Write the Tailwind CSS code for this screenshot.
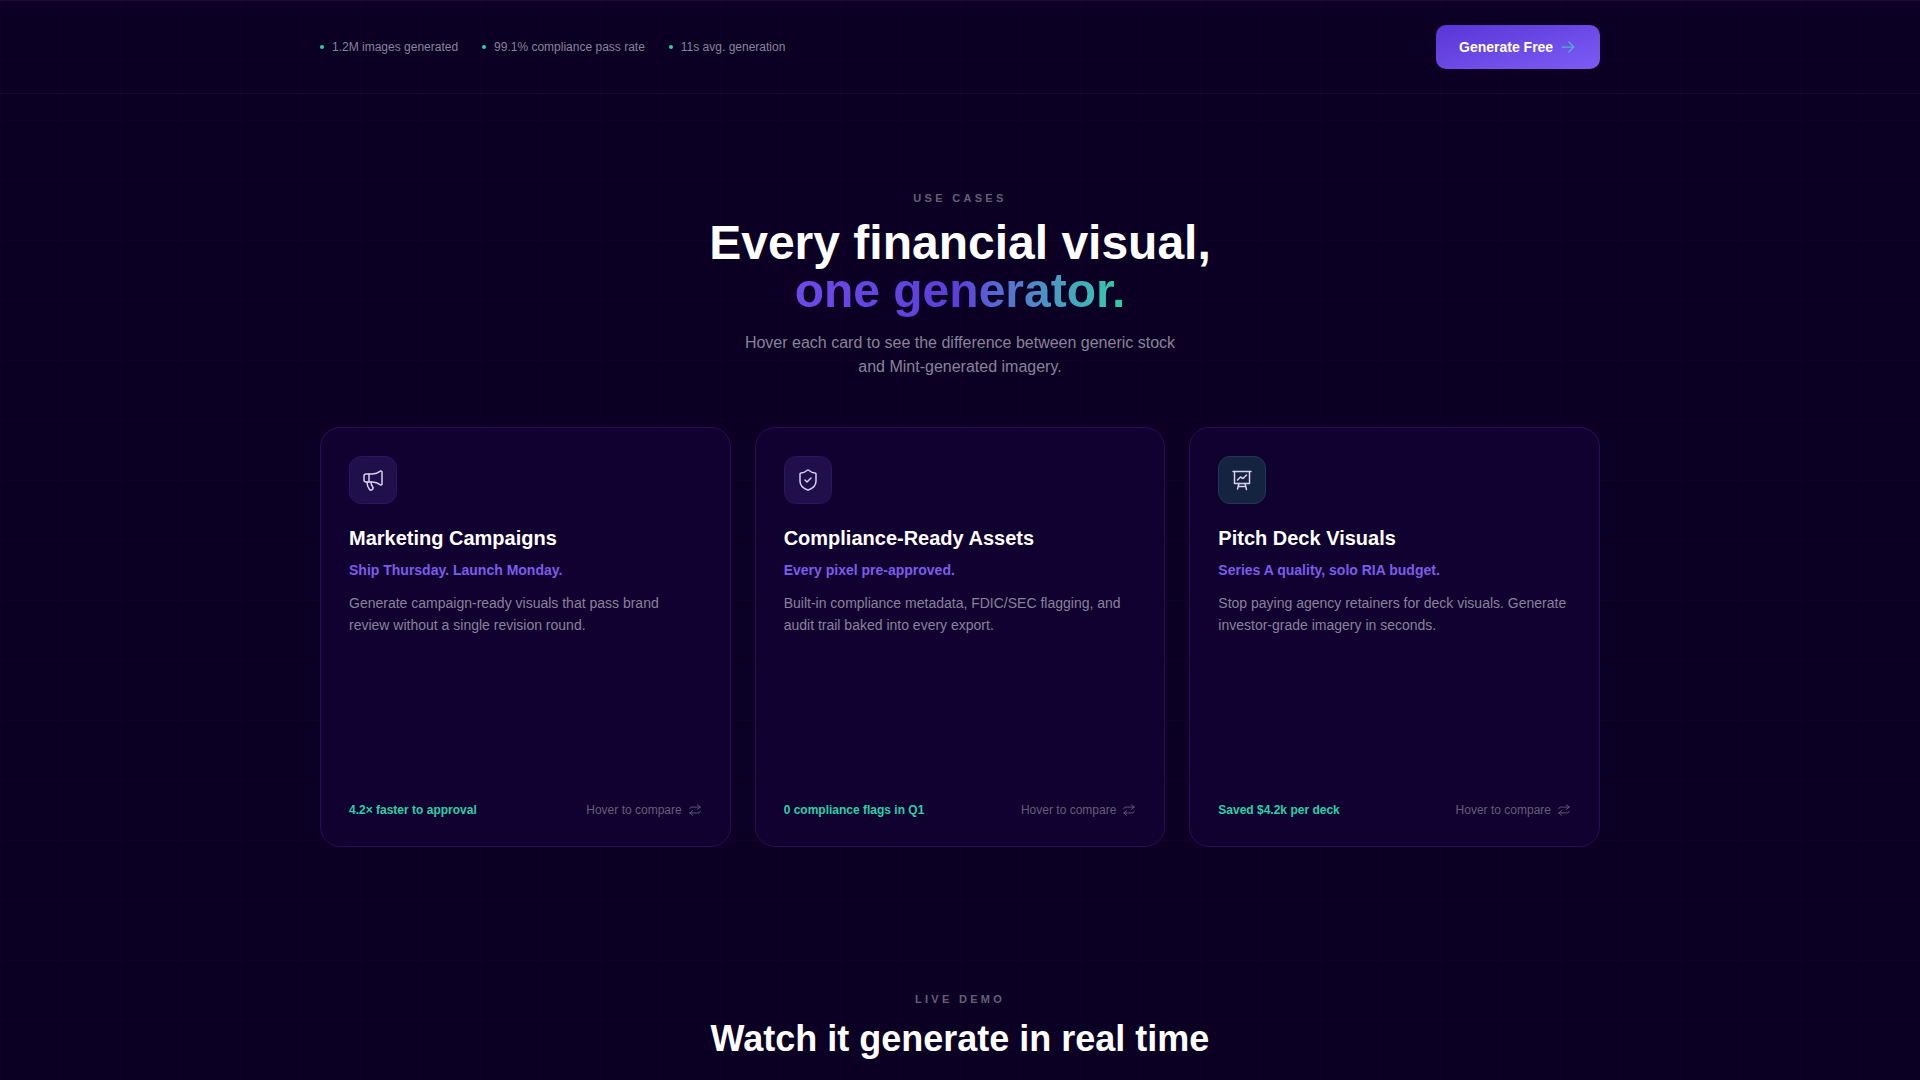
<!DOCTYPE html>
<html lang="en">

<head>
    <meta charset="UTF-8">
    <meta name="viewport" content="width=device-width, initial-scale=1.0">
    <title>Mint - Use Cases</title>
    <script src="https://cdn.jsdelivr.net/npm/@tailwindcss/browser@4"></script>
</head>

<body class="bg-[#0b0023] h-[1080px] overflow-hidden font-['Liberation_Sans',Arial,sans-serif] text-white bg-[linear-gradient(rgba(108,71,255,0.025)_1px,transparent_1px),linear-gradient(90deg,rgba(108,71,255,0.025)_1px,transparent_1px)] bg-[size:60px_60px]">
    <!-- top strip -->
    <div class="border-t border-b border-t-[#1a0a40] border-b-[#160a30] h-[94px]">
        <div class="w-[1280px] mx-auto h-full flex items-center justify-between">
            <div class="flex items-center gap-6 text-xs text-[#8a8299]">
                <div class="flex items-center gap-2"><span class="w-1 h-1 rounded-full bg-[#2bcfa8]"></span>1.2M images generated</div>
                <div class="flex items-center gap-2"><span class="w-1 h-1 rounded-full bg-[#2bcfa8]"></span>99.1% compliance pass rate</div>
                <div class="flex items-center gap-2"><span class="w-1 h-1 rounded-full bg-[#2bcfa8]"></span>11s avg. generation</div>
            </div>
            <button class="w-[164px] h-11 pl-[23px] rounded-[10px] bg-linear-to-br from-[#5b34d6] to-[#7c5cf5] flex items-center gap-[5px] text-sm font-bold text-white">
                Generate Free
                <svg class="w-5 h-5 text-[#4fb0d0]" viewBox="0 0 24 24" fill="none" stroke="currentColor" stroke-width="1.5" stroke-linecap="round" stroke-linejoin="round"><path d="M5 12h14M13 6l6 6-6 6"/></svg>
            </button>
        </div>
    </div>

    <!-- use cases -->
    <section class="w-[1280px] mx-auto pt-[96px] text-center">
        <p class="text-[11px] leading-[16px] font-bold tracking-[0.3em] text-[#665e78]">USE CASES</p>
        <h1 class="mt-[13px] text-[48px] leading-[48px] font-bold">Every financial visual,<br><span class="bg-linear-to-r from-[#6d4ae8] via-[#5b3fd8] to-[#2bcfa8] bg-clip-text text-transparent">one generator.</span></h1>
        <p class="mt-4 text-base leading-[24px] text-[#8a8299]">Hover each card to see the difference between generic stock<br>and Mint-generated imagery.</p>

        <div class="grid grid-cols-3 gap-6 mt-12 text-left">
            <article class="h-[420px] rounded-[20px] border border-[#23105a] bg-[#100130] p-7 flex flex-col">
                <div class="w-12 h-12 rounded-xl bg-[#1f0f4a] border border-[#2a1560] flex items-center justify-center">
                    <svg class="w-6 h-6 text-[#d8d0ee]" viewBox="0 0 24 24" fill="none" stroke="currentColor" stroke-width="1.5" stroke-linecap="round" stroke-linejoin="round"><path d="M11 6a13 13 0 0 0 8.4-2.8A1 1 0 0 1 21 4v12a1 1 0 0 1-1.6.8A13 13 0 0 0 11 14H5a2 2 0 0 1-2-2V8a2 2 0 0 1 2-2z"/><path d="M6 14a12 12 0 0 0 2.4 7.2 2 2 0 0 0 3.2-2.4A8 8 0 0 1 10 14"/><path d="M8 6v8"/></svg>
                </div>
                <h3 class="mt-5 text-xl leading-7 font-bold">Marketing Campaigns</h3>
                <p class="mt-2 text-sm leading-5 font-bold text-[#7c5ce8]">Ship Thursday. Launch Monday.</p>
                <p class="mt-3 text-sm leading-[22px] text-[#8a8299]">Generate campaign-ready visuals that pass brand review without a single revision round.</p>
                <div class="mt-auto flex items-center justify-between text-xs">
                    <span class="font-bold text-[#2bcfa8]">4.2× faster to approval</span>
                    <span class="flex items-center gap-[6px] text-[#665e78]">Hover to compare
                        <svg class="w-[14px] h-[14px]" viewBox="0 0 24 24" fill="none" stroke="currentColor" stroke-width="1.5" stroke-linecap="round" stroke-linejoin="round"><path d="M16 3l5 4-5 4"/><path d="M21 7H5L3 10"/><path d="M8 21l-5-4 5-4"/><path d="M3 17h16l2-3"/></svg>
                    </span>
                </div>
            </article>

            <article class="h-[420px] rounded-[20px] border border-[#23105a] bg-[#100130] p-7 flex flex-col">
                <div class="w-12 h-12 rounded-xl bg-[#1f0f4a] border border-[#2a1560] flex items-center justify-center">
                    <svg class="w-6 h-6 text-[#d8d0ee]" viewBox="0 0 24 24" fill="none" stroke="currentColor" stroke-width="1.5" stroke-linecap="round" stroke-linejoin="round"><path d="M20 13c0 5-3.5 7.5-7.66 8.95a1 1 0 0 1-.67-.01C7.5 20.5 4 18 4 13V6a1 1 0 0 1 1-1c2 0 4.5-1.2 6.24-2.72a1.17 1.17 0 0 1 1.52 0C14.51 3.81 17 5 19 5a1 1 0 0 1 1 1z"/><path d="m9 12 2 2 4-4"/></svg>
                </div>
                <h3 class="mt-5 text-xl leading-7 font-bold">Compliance-Ready Assets</h3>
                <p class="mt-2 text-sm leading-5 font-bold text-[#7c5ce8]">Every pixel pre-approved.</p>
                <p class="mt-3 text-sm leading-[22px] text-[#8a8299]">Built-in compliance metadata, FDIC/SEC flagging, and audit trail baked into every export.</p>
                <div class="mt-auto flex items-center justify-between text-xs">
                    <span class="font-bold text-[#2bcfa8]">0 compliance flags in Q1</span>
                    <span class="flex items-center gap-[6px] text-[#665e78]">Hover to compare
                        <svg class="w-[14px] h-[14px]" viewBox="0 0 24 24" fill="none" stroke="currentColor" stroke-width="1.5" stroke-linecap="round" stroke-linejoin="round"><path d="M16 3l5 4-5 4"/><path d="M21 7H5L3 10"/><path d="M8 21l-5-4 5-4"/><path d="M3 17h16l2-3"/></svg>
                    </span>
                </div>
            </article>

            <article class="h-[420px] rounded-[20px] border border-[#23105a] bg-[#100130] p-7 flex flex-col">
                <div class="w-12 h-12 rounded-xl bg-[#14233f] border border-[#1f3a55] flex items-center justify-center">
                    <svg class="w-6 h-6 text-[#d8d0ee]" viewBox="0 0 24 24" fill="none" stroke="currentColor" stroke-width="1.5" stroke-linecap="round" stroke-linejoin="round"><path d="M3 3.5h18"/><path d="M4.5 3.5v12h15v-12"/><path d="M9 15.5 7.5 21M15 15.5l1.5 6M8.5 18.5h7"/><path d="m7.5 12 3-3 2.5 1.5L16.5 7"/></svg>
                </div>
                <h3 class="mt-5 text-xl leading-7 font-bold">Pitch Deck Visuals</h3>
                <p class="mt-2 text-sm leading-5 font-bold text-[#7c5ce8]">Series A quality, solo RIA budget.</p>
                <p class="mt-3 text-sm leading-[22px] text-[#8a8299]">Stop paying agency retainers for deck visuals. Generate investor-grade imagery in seconds.</p>
                <div class="mt-auto flex items-center justify-between text-xs">
                    <span class="font-bold text-[#2bcfa8]">Saved $4.2k per deck</span>
                    <span class="flex items-center gap-[6px] text-[#665e78]">Hover to compare
                        <svg class="w-[14px] h-[14px]" viewBox="0 0 24 24" fill="none" stroke="currentColor" stroke-width="1.5" stroke-linecap="round" stroke-linejoin="round"><path d="M16 3l5 4-5 4"/><path d="M21 7H5L3 10"/><path d="M8 21l-5-4 5-4"/><path d="M3 17h16l2-3"/></svg>
                    </span>
                </div>
            </article>
        </div>
    </section>

    <!-- live demo -->
    <section class="w-[1280px] mx-auto pt-[144px] text-center">
        <p class="text-[11px] leading-[16px] font-bold tracking-[0.3em] text-[#665e78]">LIVE DEMO</p>
        <h2 class="mt-[10px] text-4xl leading-[44px] font-bold">Watch it generate in real time</h2>
    </section>
</body>

</html>
